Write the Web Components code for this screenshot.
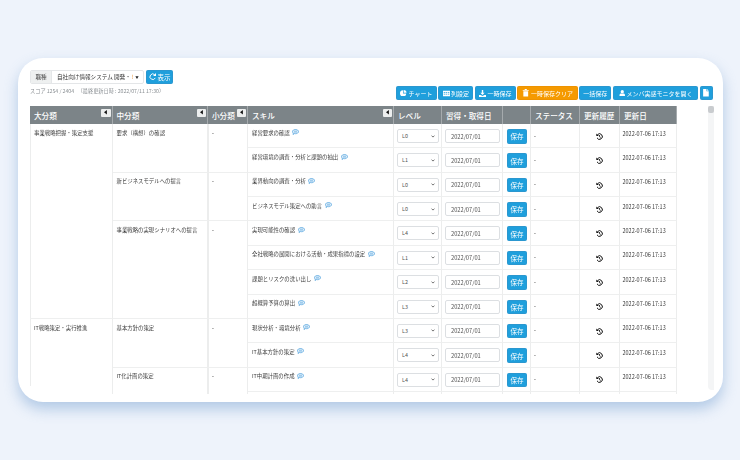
<!DOCTYPE html>
<html lang="ja"><head><meta charset="utf-8"><title>スキル</title>
<style>
html,body{margin:0;padding:0;width:740px;height:460px;overflow:hidden;background:#eef3fb;font-family:"Noto Sans CJK JP","Noto Sans",sans-serif;}
</style></head><body>
<app-card>
  <top-bar></top-bar>
  <action-bar>
    <action-button w="40.3" icon="chart">チャート</action-button>
    <action-button w="35" icon="table">列設定</action-button>
    <action-button w="40.7" icon="down">一時保存</action-button>
    <action-button w="60.3" icon="trash" tone="orange">一時保存クリア</action-button>
    <action-button w="32">一括保存</action-button>
    <action-button w="85" icon="user">メンバ実感モニタを開く</action-button>
    <action-button w="13" icon="file"></action-button>
  </action-bar>
  <table-pane><skill-table></skill-table></table-pane>
</app-card>
<script>
const ICONS={
 chart:'<svg viewBox="0 0 10 10" width="6.500" height="6.500"><path fill="#fff" d="M4.600 .4a4.800 4.800 0 1 0 5 5H4.600z"/><path fill="#fff" d="M5.600 0a4.400 4.400 0 0 1 4.400 4.400H5.600z"/></svg>',
 table:'<svg viewBox="0 0 10 10" width="7" height="7"><path fill="#fff" d="M0 1h10v8H0zM1 3.200v1.200h2.200V3.200zm3 0v1.200h2V3.200zm3 0v1.200h2V3.200zM1 5.200v1.200h2.200V5.200zm3 0v1.200h2V5.200zm3 0v1.200h2V5.200z" fill-rule="evenodd"/></svg>',
 down:'<svg viewBox="0 0 10 10" width="7" height="7"><path fill="#fff" d="M4 0h2v4h2L5 7.200 2 4h2zM0 7h2.200L5 8.600 7.800 7H10v3H0z"/></svg>',
 trash:'<svg viewBox="0 0 10 10" width="7.500" height="7.500"><path fill="#fff" d="M1 1.200h2.600V0h2.800v1.200H9v1H1zM1.800 3h6.400v7H1.800z"/></svg>',
 user:'<svg viewBox="0 0 10 10" width="6.500" height="6.500"><circle cx="5" cy="2.600" r="2.500" fill="#fff"/><path fill="#fff" d="M0.800 10V7.600C.8 6 2 5.200 3 5.200h4c1 0 2.200.8 2.200 2.400V10z"/></svg>',
 file:'<svg viewBox="0 0 10 10" width="7.500" height="7.500"><path fill="#fff" d="M1.500 0H6v3h3v7H1.500zM6.800 0 9 2.300H6.800z"/></svg>',
 reload:'<svg viewBox="0 0 10 10" width="7.500" height="7.500"><path fill="none" stroke="#fff" stroke-width="1.300" d="M8.400 6.500A3.700 3.700 0 1 1 7.600 2.300"/><path fill="#fff" d="M9.400 0v4H5.400z"/></svg>'
};
function def(name,css,html){
  customElements.define(name,class extends HTMLElement{
    connectedCallback(){
      if(this.shadowRoot)return;
      const r=this.attachShadow({mode:'open'});
      r.innerHTML='<style>'+css+'</style>'+(typeof html==='function'?html(this):html);
    }
  });
}
def('app-card',`:host{display:block;box-sizing:border-box;margin:58px 17px 0 18px;width:705px;height:344px;background:#fff;border-radius:25px;padding:12px 10px 0 12px;box-shadow:0 7px 14px rgba(105,150,205,.45);}
.in{filter:blur(.22px)}`,'<div class="in"><slot></slot></div>');
def('top-bar',`:host{display:block;height:16px}
.row{display:flex;height:14px;gap:2px;align-items:stretch}
.grp{display:flex;width:114px;border:1px solid #e4e6e8;border-radius:2px;box-sizing:border-box;overflow:hidden;font-size:5.600px;color:#444}
.lab{width:21px;background:#eef0f0;display:flex;align-items:center;justify-content:center;border-right:1px solid #e4e6e8;box-sizing:border-box}
.val{flex:1;display:flex;align-items:center;padding-left:5px;color:#333;white-space:nowrap}
.val i{font-style:normal;color:#e8923a;margin-left:1px}
.val b{font-size:3.500px;margin-left:1.500px;font-weight:400;color:#222}
.score{font-size:5.200px;color:#8b9094;line-height:7px;margin-top:3px;white-space:nowrap}
`,`<div class="row"><div class="grp"><span class="lab">職種</span><span class="val">自社向け情報システム 開発・<i>!</i><b>▼</b></span></div>
<action-button w="27" icon="reload" big>表示</action-button></div>
<div class="score">スコア 1254 / 2404 &nbsp;&nbsp;（最終更新日時 : 2022/07/11 17:30）</div>`);
def('action-bar',`:host{display:flex;justify-content:flex-end;gap:1.700px;height:14px;margin-bottom:6px;padding-right:0.300px}`,'<slot></slot>');
def('action-button',`:host{display:inline-flex;align-items:center;justify-content:center;gap:1.500px;box-sizing:border-box;height:14px;background:#1f9fdc;border-radius:1.500px;color:#fff;font-size:6px;white-space:nowrap;flex:none;border:1px solid #2b97cf}
:host([tone=orange]){background:#f59a00;border-color:#ee9300}
:host([big]){font-size:6.500px}
svg{display:block;flex:none}`,h=>{
  h.style.width=(h.getAttribute('w')||20)+'px';
  return (ICONS[h.getAttribute('icon')]||'')+'<slot></slot>';
});
def('table-pane',`:host{display:flex;gap:31px;height:288px;align-items:flex-start}
.track{width:5.500px;height:284px;background:#f4f5f6;border-radius:0 0 0 4px;flex:none}
.thumb{width:5.500px;height:6.500px;background:#c9cccf;border-radius:2px}`,'<slot></slot><div class="track"><div class="thumb"></div></div>');
def('speech-icon',`:host{display:inline-block;width:7px;height:6px;margin-left:2.500px;vertical-align:-.5px}svg{display:block}`,
 '<svg viewBox="0 0 14 12" width="7" height="6"><path fill="#e3f1fb" stroke="#4b9fdc" stroke-width="1.500" d="M7 1c3.400 0 6 1.800 6 4.200S10.400 9.400 7 9.400c-.8 0-1.500-.1-2.200-.2L2 11l.6-2.800C1.600 7.500 1 6.400 1 5.200 1 2.800 3.600 1 7 1z"/><path stroke="#4b9fdc" d="M4 4.300h6M4 6.300h6"/></svg>');
def('history-icon',`:host{display:block;width:7px;height:7px}svg{display:block}`,
 '<svg viewBox="0 0 14 14" width="7" height="7"><path fill="none" stroke="#111" stroke-width="2" d="M3 3.200A5.600 5.600 0 1 1 2 9.600"/><path fill="#111" d="M.6 1.200 5.800 6H.6z"/><path fill="none" stroke="#111" stroke-width="1.700" d="M7 4v3.400l2.400 1.500"/></svg>');
def('level-select',`:host{display:flex;align-items:center;justify-content:space-between;box-sizing:border-box;width:41.500px;height:14px;border:1px solid #dcdfe2;border-radius:2px;background:#fff;font-size:5.400px;color:#555;padding:0 3px 0 4px}
svg{display:block}`,'<span><slot></slot></span><svg viewBox="0 0 8 6" width="4" height="3"><path fill="none" stroke="#444" stroke-width="1.500" d="M1 1.200l3 3 3-3"/></svg>');
def('date-box',`:host{display:flex;align-items:center;box-sizing:border-box;width:55px;height:14px;border:1px solid #dcdfe2;border-radius:2px;background:#fff;font-size:5.700px;color:#555;padding-left:5px}`,'<slot></slot>');
def('header-cell',`:host{display:flex;align-items:center;box-sizing:border-box;position:relative;background:#7c8488;color:#fff;font-size:7.600px;font-weight:500;padding-left:4px;border-right:1px solid #a5aaad;white-space:nowrap;height:18px}
.c{position:absolute;right:1px;top:2.500px;width:9.500px;height:8.500px;background:#eceeee;display:flex;align-items:center;justify-content:center;border-radius:1px}
.c svg{display:block}`,h=>'<slot></slot>'+(h.hasAttribute('fold')?'<span class="c"><svg viewBox="0 0 6 8" width="3.500" height="4.600"><path fill="#111" d="M5 0 0 4l5 4z"/></svg></span>':''));
const cols=[82.5,95.5,40,146,48,61,28,49,40,57];
const rows=[
 ['経営要求の確認','L0'],['経営環境の調査・分析と課題の抽出','L1'],['業界動向の調査・分析','L0'],['ビジネスモデル策定への助言','L0'],
 ['実現可能性の確認','L4'],['全社戦略の展開における活動・成果指標の設定','L1'],['課題とリスクの洗い出し','L2'],['超概算予算の算出','L3'],
 ['現状分析・環境分析','L3'],['IT基本方針の策定','L4'],['IT中期計画の作成','L4']];
const big=[[1,8,'事業戦略把握・策定支援'],[9,4,'IT戦略策定・実行推進']];
const mid=[[1,2,'要求（構想）の確認'],[3,2,'新ビジネスモデルへの提言'],[5,4,'事業戦略の実現シナリオへの提言'],[9,2,'基本方針の策定'],[11,2,'IT化計画の策定']];
function tableHTML(){
 let s='';
 [['大分類',1],['中分類',1],['小分類',1],['スキル',1],['レベル',0],['習得・取得日',0],['',0],['ステータス',0],['更新履歴',0],['更新日',0]].forEach(([t,f])=>{
   s+=`<header-cell ${f?'fold':''}>${t}</header-cell>`;
 });
 big.forEach(([r,n,t])=>s+=`<div class="cell txt" style="grid-column:1;grid-row:${r+1}/span ${n}">${t}</div>`);
 mid.forEach(([r,n,t])=>{
   s+=`<div class="cell txt" style="grid-column:2;grid-row:${r+1}/span ${n}">${t}</div>`;
   s+=`<div class="cell txt thick" style="grid-column:3;grid-row:${r+1}/span ${n}">-</div>`;
 });
 rows.forEach(([t,l],i)=>{
   const g=`grid-row:${i+2}`;
   s+=`<div class="cell txt" style="grid-column:4;${g}">${t}<speech-icon></speech-icon></div>`;
   s+=`<div class="cell ctl" style="grid-column:5;${g}"><level-select>${l}</level-select></div>`;
   s+=`<div class="cell ctl" style="grid-column:6;${g}"><date-box>2022/07/01</date-box></div>`;
   s+=`<div class="cell ctl save" style="grid-column:7;${g}"><action-button w="20" style="font-size:6.500px;height:14.600px">保存</action-button></div>`;
   s+=`<div class="cell txt st" style="grid-column:8;${g}">-</div>`;
   s+=`<div class="cell ctl mid" style="grid-column:9;${g}"><history-icon></history-icon></div>`;
   s+=`<div class="cell txt dt" style="grid-column:10;${g}">2022-07-06 17:13</div>`;
 });
 for(let c=4;c<=10;c++) s+=`<div class="cell" style="grid-column:${c};grid-row:13"></div>`;
 return s;
}
def('skill-table',`:host{display:block;width:647px;height:288px;overflow:hidden;flex:none;background:linear-gradient(#eceded,#eceded) 0 18px/1px 262px no-repeat}
.g{display:grid;grid-template-columns:${cols.map(c=>c+'px').join(' ')};grid-template-rows:18px repeat(12,24.360px)}
.cell{box-sizing:border-box;border-right:1px solid #eceded;border-bottom:1.500px solid #eeefef;min-width:0;white-space:nowrap}
.txt{font-size:5.400px;color:#3c3c3c;padding:4.700px 0 0 4px;line-height:8px}
.thick{border-left:1.500px solid #eceded;padding-left:3px}
.st{padding-top:7.500px;padding-left:3px}
.dt{padding-top:5.500px;padding-left:2.500px;font-size:5.500px}
.ctl{display:flex;align-items:flex-start;padding:5px 0 0 3px}
.save{padding-left:4px}
.mid{justify-content:center;padding:8.800px 0 0 0}
`,()=>`<div class="g">${tableHTML()}</div>`);
</script>
</body></html>
